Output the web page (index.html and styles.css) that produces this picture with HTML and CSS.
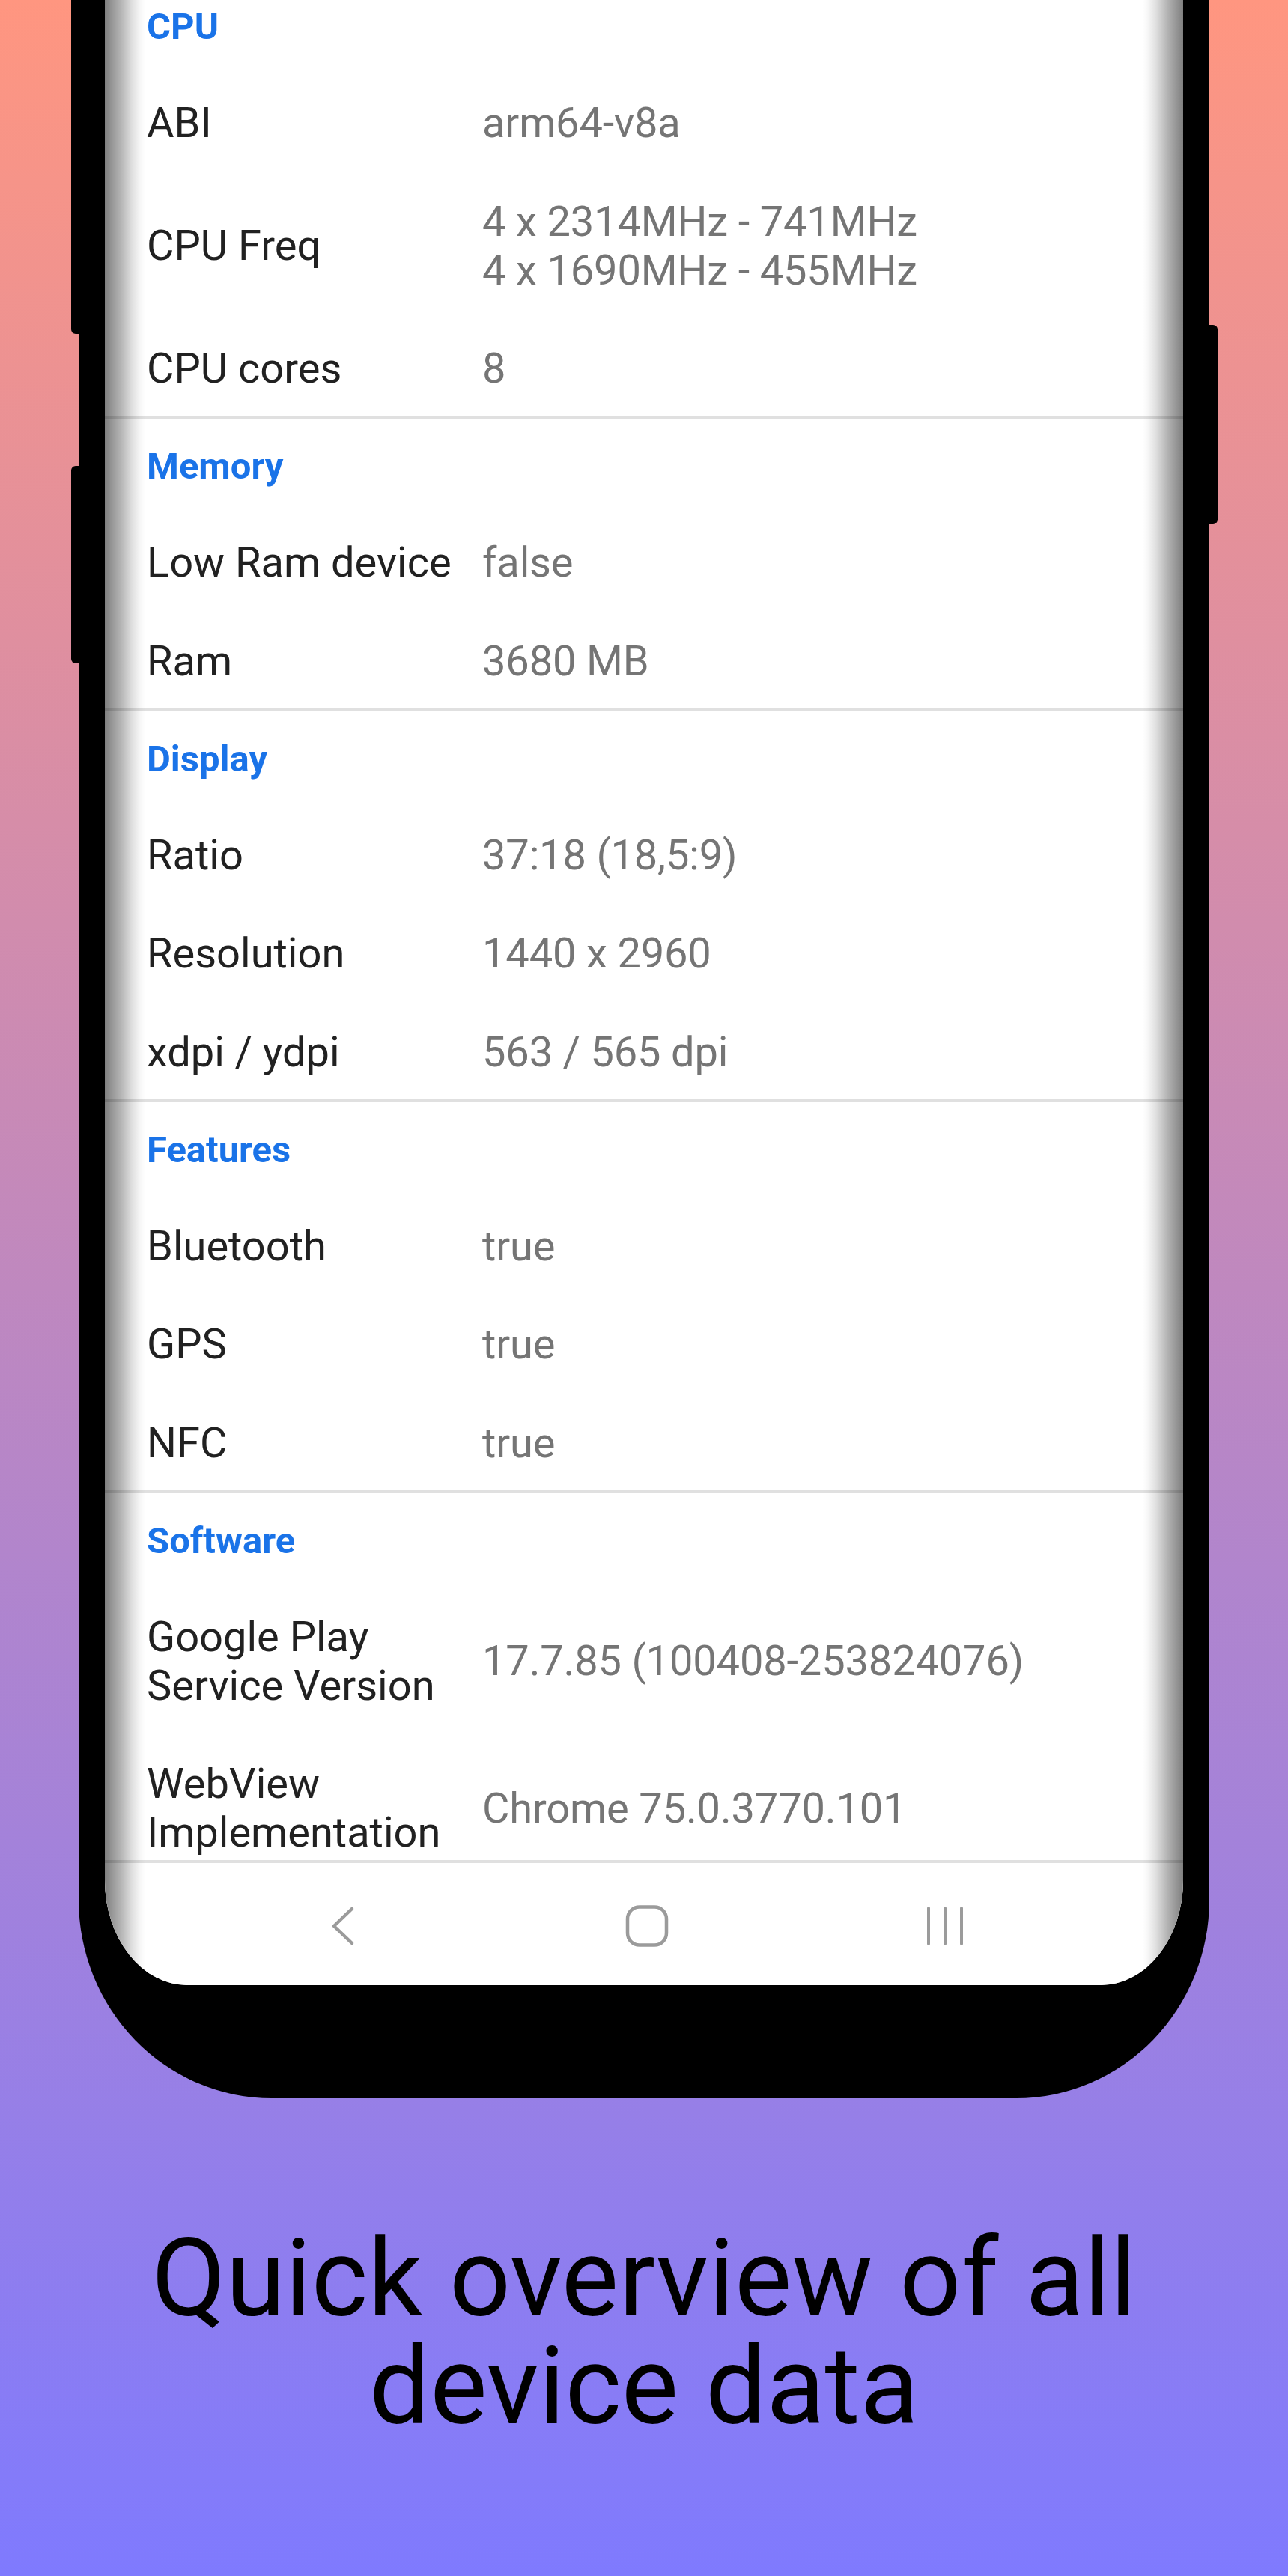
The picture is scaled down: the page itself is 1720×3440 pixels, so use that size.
FILE: index.html
```html
<!DOCTYPE html>
<html lang="en">
<head>
<meta charset="utf-8">
<title>Device Info</title>
<link rel="stylesheet" href="styles.css">
</head>
<body>
<div class="page">
  <div class="phone">
    <span class="btn btn-l1"></span>
    <span class="btn btn-l2"></span>
    <span class="btn btn-r1"></span>
    <div class="screen">
      <div class="list">
        <section class="group">
          <h2 class="group-title">CPU</h2>
          <div class="row"><div class="label">ABI</div><div class="value">arm64-v8a</div></div>
          <div class="row"><div class="label">CPU Freq</div><div class="value">4 x 2314MHz - 741MHz<br>4 x 1690MHz - 455MHz</div></div>
          <div class="row"><div class="label">CPU cores</div><div class="value">8</div></div>
        </section>
        <section class="group">
          <h2 class="group-title">Memory</h2>
          <div class="row"><div class="label">Low Ram device</div><div class="value">false</div></div>
          <div class="row"><div class="label">Ram</div><div class="value">3680 MB</div></div>
        </section>
        <section class="group">
          <h2 class="group-title">Display</h2>
          <div class="row"><div class="label">Ratio</div><div class="value">37:18 (18,5:9)</div></div>
          <div class="row"><div class="label">Resolution</div><div class="value">1440 x 2960</div></div>
          <div class="row"><div class="label">xdpi / ydpi</div><div class="value">563 / 565 dpi</div></div>
        </section>
        <section class="group">
          <h2 class="group-title">Features</h2>
          <div class="row"><div class="label">Bluetooth</div><div class="value">true</div></div>
          <div class="row"><div class="label">GPS</div><div class="value">true</div></div>
          <div class="row"><div class="label">NFC</div><div class="value">true</div></div>
        </section>
        <section class="group">
          <h2 class="group-title">Software</h2>
          <div class="row"><div class="label">Google Play Service Version</div><div class="value">17.7.85 (100408-253824076)</div></div>
          <div class="row"><div class="label">WebView Implementation</div><div class="value">Chrome 75.0.3770.101</div></div>
        </section>
      </div>
      <nav class="navbar">
        <svg class="nav-icon" viewBox="0 0 60 60" width="60" height="60" aria-label="Back">
          <polyline points="42,7 18,30 42,53" fill="none" stroke="#9b9b9b" stroke-width="4.5" stroke-linecap="round" stroke-linejoin="round"/>
        </svg>
        <svg class="nav-icon nav-home" viewBox="0 0 60 60" width="60" height="60" aria-label="Home">
          <rect x="4" y="4.5" width="52" height="51" rx="16" ry="16" fill="none" stroke="#9b9b9b" stroke-width="4.5"/>
        </svg>
        <svg class="nav-icon" viewBox="0 0 60 60" width="60" height="60" aria-label="Recents">
          <line x1="8" y1="6" x2="8" y2="54" stroke="#9b9b9b" stroke-width="4" stroke-linecap="round"/>
          <line x1="30" y1="6" x2="30" y2="54" stroke="#9b9b9b" stroke-width="4" stroke-linecap="round"/>
          <line x1="52" y1="6" x2="52" y2="54" stroke="#9b9b9b" stroke-width="4" stroke-linecap="round"/>
        </svg>
      </nav>
      <div class="shade shade-l"></div>
      <div class="shade shade-r"></div>
    </div>
  </div>
  <h1 class="caption">Quick overview of all<br>device data</h1>
</div>
</body>
</html>
```

FILE: styles.css
```css
html, body {
  margin: 0;
  padding: 0;
}

body {
  font-family: Roboto, "Liberation Sans", Arial, sans-serif;
}

.page {
  min-height: 3440px;
  background: linear-gradient(to bottom, #ff9680 0%, #7f7afe 100%);
  overflow: hidden;
}

.phone {
  position: relative;
  margin-left: 105px;
  width: 1510px;
  height: 2802px;
  box-sizing: border-box;
  padding: 0 35px;
  background: #000;
  border-radius: 0 0 258px 258px / 0 0 265px 265px;
}

.btn {
  position: absolute;
  background: #000;
}

.btn-l1 {
  left: -10px;
  top: 0;
  width: 10px;
  height: 446px;
  border-radius: 0 0 0 6px;
}

.btn-l2 {
  left: -10px;
  top: 622px;
  width: 10px;
  height: 264px;
  border-radius: 6px 0 0 6px;
}

.btn-r1 {
  right: -11px;
  top: 434px;
  width: 11px;
  height: 266px;
  border-radius: 0 6px 6px 0;
}

.screen {
  position: relative;
  height: 2651px;
  background: #fff;
  overflow: hidden;
  display: flex;
  flex-direction: column;
  border-radius: 0 0 110px 110px / 0 0 140px 140px;
}

.list {
  flex: 1 1 auto;
  min-height: 0;
  overflow: hidden;
}

.group {
  border-bottom: 4px solid #e0e0e0;
}

.group-title {
  margin: 0;
  padding: 35px 56px 31.5px;
  font-size: 49px;
  line-height: 57px;
  font-weight: 700;
  color: #1a73e8;
}

.group:first-child .group-title {
  padding-top: 7px;
}

.row {
  display: flex;
  align-items: center;
  padding: 36.5px 56px 30px;
  font-size: 56px;
  line-height: 65px;
  font-weight: 400;
}

.label {
  flex: 0 0 448px;
  color: #212121;
}

.value {
  flex: 1 1 auto;
  color: #757575;
  letter-spacing: -0.15px;
}

.navbar {
  flex: 0 0 167px;
  box-sizing: border-box;
  border-top: 4px solid #e0e0e0;
  padding-top: 4px;
  display: flex;
  align-items: center;
  justify-content: center;
  gap: 342px;
  background: #fff;
}

.nav-icon {
  display: block;
  flex: none;
}

.nav-home {
  margin-left: 4px;
  margin-right: -4px;
}

.shade {
  position: absolute;
  top: 0;
  bottom: 0;
  width: 54px;
  pointer-events: none;
}

.shade-l {
  left: 0;
  background: linear-gradient(to right, rgba(0,0,0,0.5) 0%, rgba(0,0,0,0.3) 38%, rgba(0,0,0,0.12) 68%, rgba(0,0,0,0.03) 88%, rgba(0,0,0,0) 100%);
}

.shade-r {
  right: 0;
  background: linear-gradient(to left, rgba(0,0,0,0.5) 0%, rgba(0,0,0,0.3) 38%, rgba(0,0,0,0.12) 68%, rgba(0,0,0,0.03) 88%, rgba(0,0,0,0) 100%);
}

.caption {
  margin: 169px 0 0;
  font-size: 144px;
  line-height: 144px;
  font-weight: 400;
  color: #000;
  text-align: center;
}
```
